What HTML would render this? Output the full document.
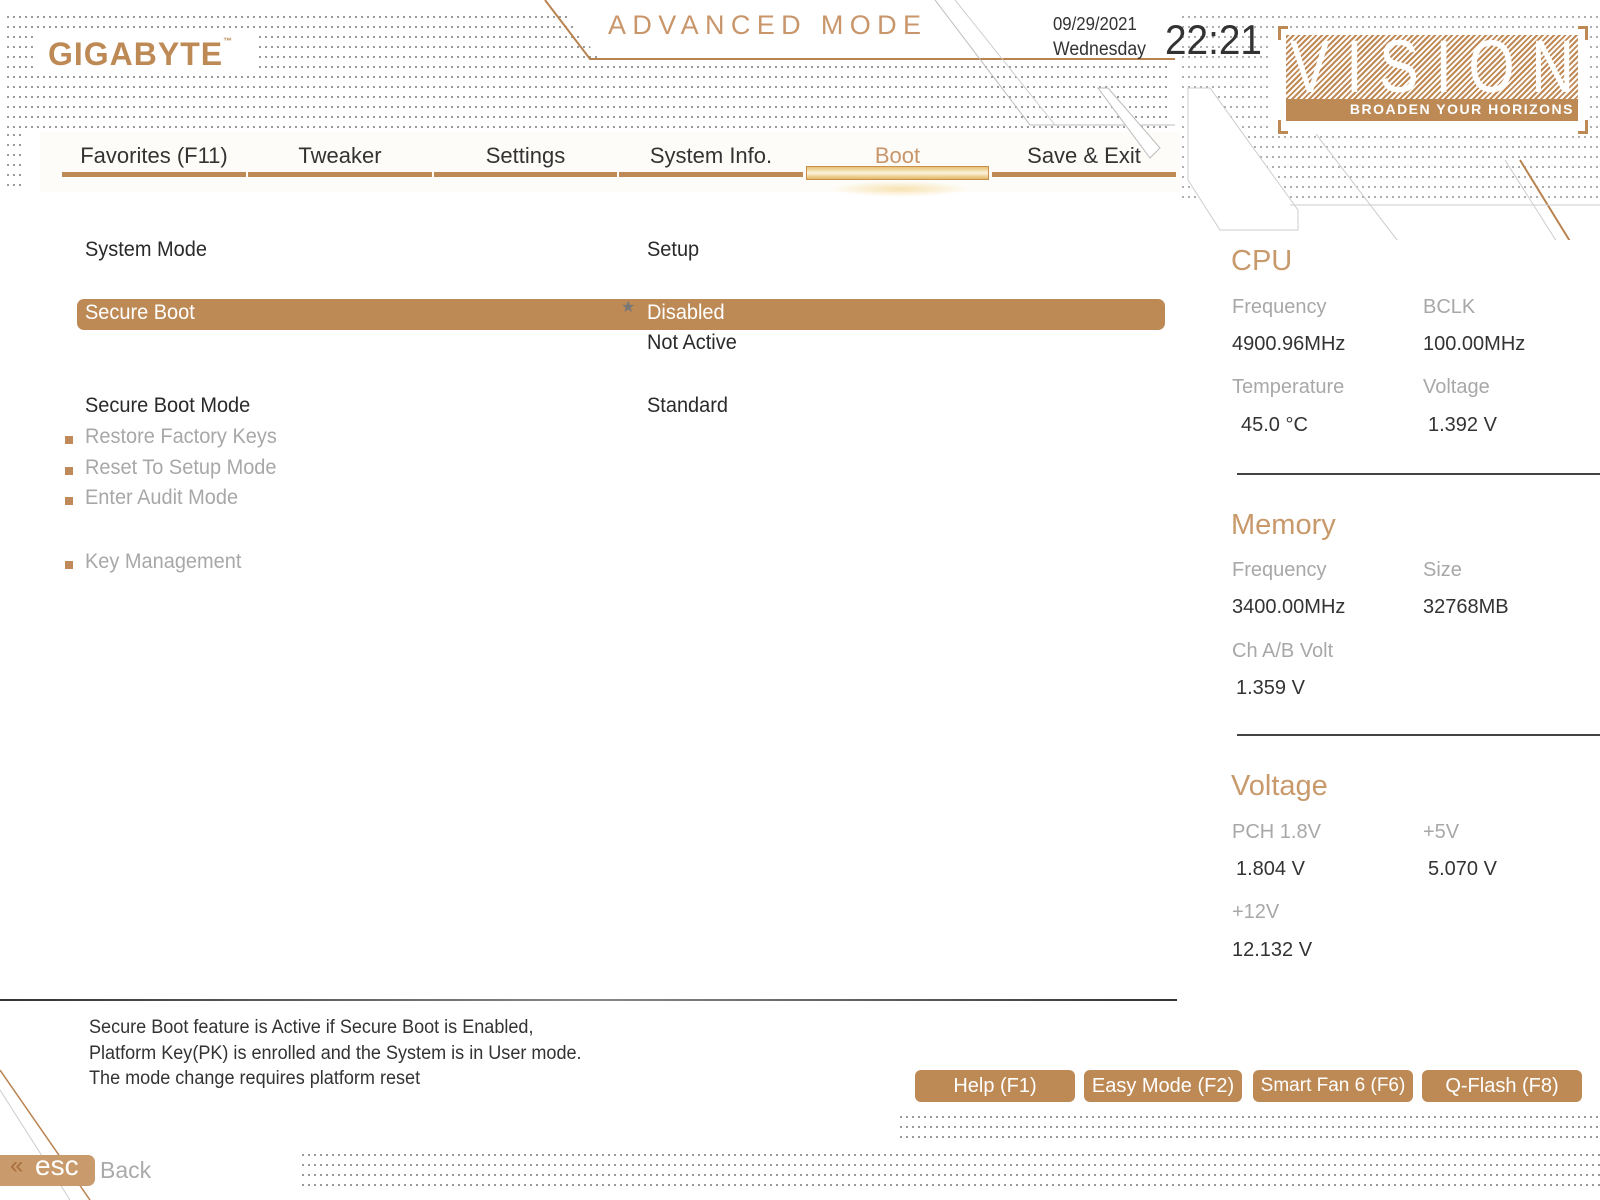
<!DOCTYPE html>
<html><head><meta charset="utf-8"><style>
*{margin:0;padding:0;box-sizing:border-box}
body{width:1600px;height:1200px;background:#fff;position:relative;overflow:hidden;font-family:"Liberation Sans",sans-serif;color:#2a2a2a}
.a{position:absolute;white-space:nowrap;transform-origin:0 0}
.n{transform:scaleX(.93);transform-origin:0 0}
.dots{position:absolute;background-image:radial-gradient(circle,#8a8a8a 0.9px,transparent 1.2px);background-size:6px 10px}
.tab{position:absolute;top:143px;height:26px;font-size:22px;text-align:center;color:#333;white-space:nowrap}
.ul{position:absolute;top:172px;height:5px;background:#bd8a56}
.t{font-size:21px;color:#2a2a2a;transform:scaleX(.95)}
.g{font-size:21px;color:#a8a8a8;transform:scaleX(.95)}
.b{position:absolute;left:65px;width:8px;height:8px;background:#c0895a}
.h{font-size:29px;color:#c8996b}
.l{font-size:20px;color:#a8a8a8}
.v{font-size:20px;color:#333}
.btn{position:absolute;top:1070px;height:32px;background:#bd8a56;border-radius:6px;color:#fff;font-size:20px;text-align:center;line-height:32px;white-space:nowrap;overflow:hidden}
.br{position:absolute;width:10px;height:14px;border-color:#bd8a56;border-style:solid;border-width:0}
</style></head><body>
<div class="dots" style="left:5px;top:12px;width:1165px;height:118px"></div>
<div class="dots" style="left:5px;top:130px;width:20px;height:56px"></div>
<div style="position:absolute;left:34px;top:34px;width:222px;height:42px;background:#fff"></div>
<div style="position:absolute;left:555px;top:0;width:620px;height:60px;background:#fff;clip-path:polygon(0 0,100% 0,100% 100%,45px 100%)"></div>
<div class="dots" style="left:1180px;top:12px;width:420px;height:190px;opacity:.8"></div>
<div style="position:absolute;left:40px;top:132px;width:1140px;height:60px;background:#fdfcf8"></div>
<svg class="a" style="left:0;top:0" width="1600" height="240">
<polyline points="545,0 590,59 1175,59" fill="none" stroke="#b9834f" stroke-width="2"/>
<polyline points="935,0 1030,125 1175,125" fill="none" stroke="#bbb" stroke-width="1"/>
<polyline points="955,0 1055,125" fill="none" stroke="#ccc" stroke-width="1"/>
<polygon points="1098,88 1108,88 1160,148 1150,158" fill="#fff" stroke="#bbb"/>
<polygon points="1188,88 1210,88 1298,210 1298,230 1220,230 1188,180" fill="#fff" stroke="#ccc"/>
<polyline points="1290,100 1420,270" stroke="#ccc" fill="none"/>
<polyline points="1520,160 1600,290" stroke="#b9834f" fill="none" stroke-width="2"/>
<polyline points="1505,160 1600,310" stroke="#ccc" fill="none"/>
<polyline points="1290,205 1600,205" stroke="#ccc"/>
<text x="608" y="34" font-family="Liberation Sans" font-size="27" fill="#c8966a" textLength="313" lengthAdjust="spacing">ADVANCED  MODE</text>
<text x="1165" y="54" font-family="Liberation Sans" font-size="42" fill="#333" textLength="97" lengthAdjust="spacingAndGlyphs">22:21</text>
</svg>
<div class="a" style="left:48px;top:36px;font-weight:bold;font-size:32px;color:#bd8a56;letter-spacing:1px">GIGABYTE<span style="font-size:9px;vertical-align:top">™</span></div>
<div class="a n" style="left:1053px;top:14px;font-size:18px;color:#333">09/29/2021</div>
<div class="a n" style="left:1053px;top:39px;font-size:19px;color:#333">Wednesday</div>
<!-- VISION -->
<div style="position:absolute;left:1272px;top:28px;width:316px;height:106px;background:#fff"></div>
<div class="br" style="left:1278px;top:26px;border-left-width:3px;border-top-width:3px"></div>
<div class="br" style="left:1578px;top:26px;border-right-width:3px;border-top-width:3px"></div>
<div class="br" style="left:1278px;top:120px;border-left-width:3px;border-bottom-width:3px"></div>
<div class="br" style="left:1578px;top:120px;border-right-width:3px;border-bottom-width:3px"></div>
<div style="position:absolute;left:1286px;top:35px;width:292px;height:85px;background:repeating-linear-gradient(-45deg,#c08a56 0 2px,#fff 2px 4px)"></div>
<svg class="a" style="left:1286px;top:35px" width="292" height="60"><text x="4" y="57" font-family="Liberation Sans" font-size="74" fill="#fff" textLength="284" lengthAdjust="spacingAndGlyphs">V I S I O N</text></svg>
<div style="position:absolute;left:1286px;top:99px;width:292px;height:22px;background:#bd8a56"></div>
<div class="a" style="right:26px;top:101px;font-weight:bold;font-size:14px;color:#fff;letter-spacing:1.5px">BROADEN YOUR HORIZONS</div>
<!-- tabs -->
<div class="tab" style="left:62px;width:184px">Favorites (F11)</div>
<div class="tab" style="left:248px;width:184px">Tweaker</div>
<div class="tab" style="left:434px;width:183px">Settings</div>
<div class="tab" style="left:619px;width:184px">System Info.</div>
<div class="tab" style="left:806px;width:183px;color:#c8966a">Boot</div>
<div class="tab" style="left:992px;width:184px">Save &amp; Exit</div>
<div class="ul" style="left:62px;width:184px"></div>
<div class="ul" style="left:248px;width:184px"></div>
<div class="ul" style="left:434px;width:183px"></div>
<div class="ul" style="left:619px;width:184px"></div>
<div class="ul" style="left:992px;width:184px"></div>
<div style="position:absolute;left:806px;top:166px;width:183px;height:14px;background:linear-gradient(#e8c070,#fbf3dc 50%,#e3b760);border:1px solid #c8904e"></div>
<div style="position:absolute;left:830px;top:181px;width:140px;height:16px;background:radial-gradient(ellipse,rgba(245,210,130,.6),transparent 70%)"></div>
<!-- content -->
<div class="a t" style="left:85px;top:238px">System Mode</div>
<div class="a t" style="left:647px;top:238px">Setup</div>
<div style="position:absolute;left:77px;top:299px;width:1088px;height:31px;background:#bd8a56;border-radius:7px"></div>
<div class="a t" style="left:85px;top:301px;color:#fff">Secure Boot</div>
<div class="a" style="left:621px;top:297px;font-size:16px;color:#777">★</div>
<div class="a t" style="left:647px;top:301px;color:#fff">Disabled</div>
<div class="a t" style="left:647px;top:331px">Not Active</div>
<div class="a t" style="left:85px;top:394px">Secure Boot Mode</div>
<div class="a t" style="left:647px;top:394px">Standard</div>
<div class="b" style="top:436px"></div><div class="a g" style="left:85px;top:425px">Restore Factory Keys</div>
<div class="b" style="top:467px"></div><div class="a g" style="left:85px;top:456px">Reset To Setup Mode</div>
<div class="b" style="top:497px"></div><div class="a g" style="left:85px;top:486px">Enter Audit Mode</div>
<div class="b" style="top:561px"></div><div class="a g" style="left:85px;top:550px">Key Management</div>
<!-- right panel -->
<div class="a h" style="left:1231px;top:245px">CPU</div>
<div class="a l" style="left:1232px;top:296px">Frequency</div><div class="a l" style="left:1423px;top:296px">BCLK</div>
<div class="a v" style="left:1232px;top:333px">4900.96MHz</div><div class="a v" style="left:1423px;top:333px">100.00MHz</div>
<div class="a l" style="left:1232px;top:376px">Temperature</div><div class="a l" style="left:1423px;top:376px">Voltage</div>
<div class="a v" style="left:1241px;top:414px">45.0 °C</div><div class="a v" style="left:1428px;top:414px">1.392 V</div>
<div style="position:absolute;left:1237px;top:473px;width:363px;height:2px;background:#444"></div>
<div class="a h" style="left:1231px;top:509px">Memory</div>
<div class="a l" style="left:1232px;top:559px">Frequency</div><div class="a l" style="left:1423px;top:559px">Size</div>
<div class="a v" style="left:1232px;top:596px">3400.00MHz</div><div class="a v" style="left:1423px;top:596px">32768MB</div>
<div class="a l" style="left:1232px;top:640px">Ch A/B Volt</div>
<div class="a v" style="left:1236px;top:677px">1.359 V</div>
<div style="position:absolute;left:1237px;top:734px;width:363px;height:2px;background:#444"></div>
<div class="a h" style="left:1231px;top:770px">Voltage</div>
<div class="a l" style="left:1232px;top:821px">PCH 1.8V</div><div class="a l" style="left:1423px;top:821px">+5V</div>
<div class="a v" style="left:1236px;top:858px">1.804 V</div><div class="a v" style="left:1428px;top:858px">5.070 V</div>
<div class="a l" style="left:1232px;top:901px">+12V</div>
<div class="a v" style="left:1232px;top:939px">12.132 V</div>
<!-- bottom -->
<div style="position:absolute;left:0;top:999px;width:1177px;height:2px;background:linear-gradient(90deg,#333,#888 50%,#333)"></div>
<div class="a n" style="left:89px;top:1015px;font-size:19px;color:#333;line-height:25.5px;transform:scaleX(.95)">Secure Boot feature is Active if Secure Boot is Enabled,<br>Platform Key(PK) is enrolled and the System is in User mode.<br>The mode change requires platform reset</div>
<div class="btn" style="left:915px;width:160px">Help (F1)</div>
<div class="btn" style="left:1084px;width:158px">Easy Mode (F2)</div>
<div class="btn" style="left:1253px;width:160px;font-size:19px">Smart Fan 6 (F6)</div>
<div class="btn" style="left:1422px;width:160px">Q-Flash (F8)</div>
<div class="dots" style="left:898px;top:1112px;width:702px;height:32px"></div>
<div class="dots" style="left:300px;top:1150px;width:1300px;height:42px"></div>
<svg class="a" style="left:0;top:1040px" width="120" height="160"><polyline points="0,30 90,160" stroke="#b9834f" fill="none" stroke-width="1.5"/><polyline points="0,50 70,160" stroke="#ccc" fill="none"/></svg>
<div style="position:absolute;left:0;top:1155px;width:95px;height:31px;background:#c99a6c;border-radius:0 7px 7px 0"></div>
<div class="a" style="left:10px;top:1152px;font-size:24px;color:#a8703c">«</div>
<div class="a" style="left:35px;top:1150px;font-size:28px;color:#fff">esc</div>
<div class="a" style="left:100px;top:1157px;font-size:23px;color:#aaa">Back</div>
</body></html>
